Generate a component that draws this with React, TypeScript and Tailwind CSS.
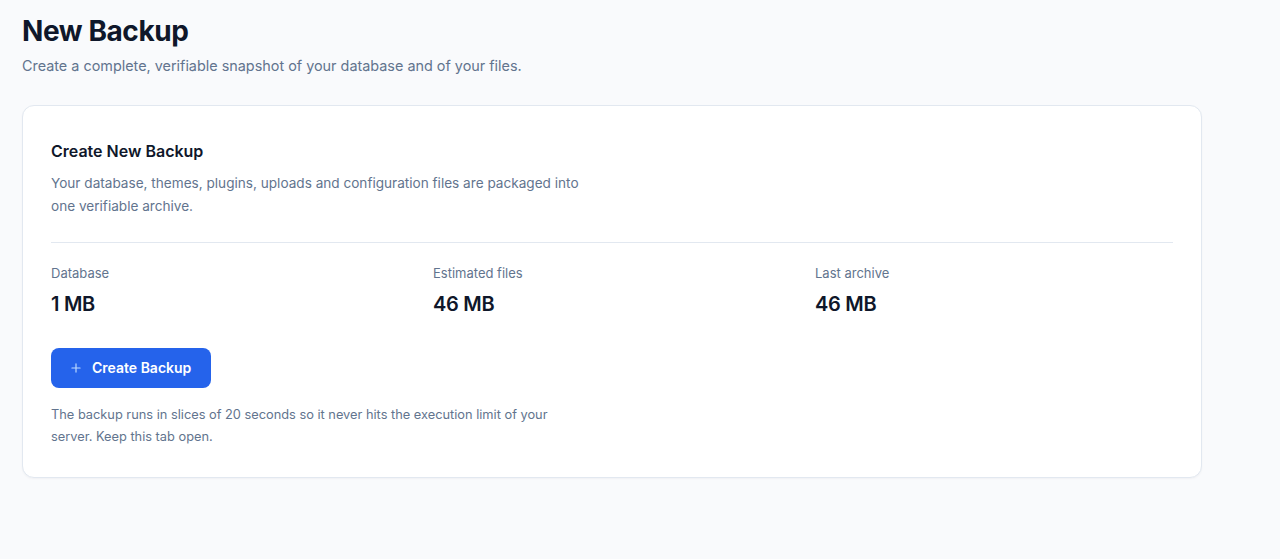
import { Plus } from "lucide-react";

type Stat = { label: string; value: string };

const stats: Stat[] = [
  { label: "Database", value: "1 MB" },
  { label: "Estimated files", value: "46 MB" },
  { label: "Last archive", value: "46 MB" },
];

export default function App() {
  return (
    <div className="min-h-[559px] bg-[#f9fafc] font-['Inter',sans-serif] text-slate-900">
      <div className="w-[1180px] pl-[22px] pt-[13px] box-content">
        <h1 className="text-[28px] font-bold leading-9 tracking-[-0.015em] text-[#0f172a]">New Backup</h1>
        <p className="mt-[7px] text-[14.4px] leading-5 text-slate-500">
          Create a complete, verifiable snapshot of your database and of your files.
        </p>

        <section className="mt-[29px] rounded-xl border border-slate-200 bg-white px-7 pt-[33px] pb-[29px] shadow-[0_1px_2px_rgba(15,23,42,0.04)]">
          <h2 className="text-base font-semibold leading-6 text-[#0f172a]">Create New Backup</h2>
          <p className="mt-[9px] max-w-[545px] text-[13.6px] leading-[23px] text-slate-500">
            Your database, themes, plugins, uploads and configuration files are packaged into one verifiable archive.
          </p>

          <div className="mt-[24px] border-t border-slate-200 pt-5">
            <div className="grid grid-cols-3 gap-6">
              {stats.map((s) => (
                <div key={s.label}>
                  <div className="text-[13px] leading-5 text-slate-500">{s.label}</div>
                  <div className="mt-[7px] text-xl font-semibold leading-7 tracking-[-0.015em] text-[#0f172a]">{s.value}</div>
                </div>
              ))}
            </div>
          </div>

          <button className="mt-[30px] flex h-10 items-center gap-[9px] rounded-lg bg-[#2563eb] pl-[18px] pr-[20px] text-sm font-semibold text-white">
            <Plus className="h-3.5 w-3.5 text-blue-200" strokeWidth={2} />
            Create Backup
          </button>

          <p className="mt-[16px] max-w-[520px] text-[12.8px] leading-[22px] text-slate-500">
            The backup runs in slices of 20 seconds so it never hits the execution limit of your server. Keep this tab open.
          </p>
        </section>
      </div>
    </div>
  );
}
